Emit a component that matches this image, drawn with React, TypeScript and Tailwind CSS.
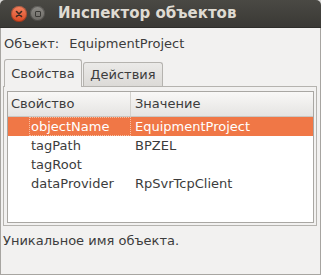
// Окно "Инспектор объектов": вкладка свойств с таблицей и подсказкой снизу.

const FONT = "font-['DejaVu_Sans',sans-serif]";

type Row = { name: string; value: string };

const ROWS: Row[] = [
  { name: 'objectName', value: 'EquipmentProject' },
  { name: 'tagPath', value: 'BPZEL' },
  { name: 'tagRoot', value: '' },
  { name: 'dataProvider', value: 'RpSvrTcpClient' },
];

function TitleBar() {
  return (
    <div className="flex h-[28px] items-center rounded-t-[5px] border-b border-[#2f2e2b] bg-gradient-to-b from-[#4a4944] to-[#3a3935]">
      {/* кнопки окна */}
      <div className="ml-[11px] flex h-[16px] w-[16px] items-center justify-center rounded-full bg-gradient-to-b from-[#f58360] to-[#d9471f] shadow-[inset_0_0_0_1px_rgba(0,0,0,0.25)]">
        <svg width="8" height="8" viewBox="0 0 8 8">
          <path d="M1.5 1.5 L6.5 6.5 M6.5 1.5 L1.5 6.5" stroke="#3b2a22" strokeWidth="1.6" strokeLinecap="round" />
        </svg>
      </div>
      <div className="ml-[3px] flex h-[15px] w-[15px] items-center justify-center rounded-full bg-gradient-to-b from-[#8d8b86] to-[#6c6a65] shadow-[inset_0_0_0_1px_rgba(0,0,0,0.3)]">
        <div className="h-[6px] w-[6px] rounded-[1px] border border-[#3a3935]" />
      </div>
      <span className="ml-[13px] text-[15px] font-bold leading-none text-[#dfdbd2]">
        Инспектор объектов
      </span>
    </div>
  );
}

function Tabs() {
  return (
    <div className="ml-[3px] flex items-end">
      <div className="relative z-10 -mb-px flex h-[28px] w-[78px] items-center justify-center rounded-t-[3px] border border-b-0 border-[#b5b3af] bg-[#f2f1f0] text-[13px]">
        Свойства
      </div>
      <div className="ml-px flex h-[24px] w-[80px] items-center justify-center rounded-t-[3px] border border-b-0 border-[#b5b3af] bg-gradient-to-b from-[#ebeae8] to-[#dcdad7] text-[13px]">
        Действия
      </div>
    </div>
  );
}

function PropertyTable() {
  return (
    <div className="flex h-[132px] w-[307px] flex-col border border-[#a9a7a3] bg-white">
      <div className="flex h-[25px] shrink-0 border-b border-[#c9c7c3] bg-gradient-to-b from-[#f9f8f7] to-[#e5e4e2] text-[13px]">
        <div className="flex w-[123px] items-center border-r border-[#d3d1cd] pl-[3px]">Свойство</div>
        <div className="flex items-center pl-[4px]">Значение</div>
      </div>
      {ROWS.map((r, i) => {
        const selected = i === 0;
        return (
          <div
            key={r.name}
            className={
              selected
                ? 'flex h-[19px] shrink-0 bg-[#f07746] text-[13px] text-white'
                : 'flex h-[19px] shrink-0 text-[13px]'
            }
          >
            <div className="flex w-[123px] items-center pl-[21px]">
              <div
                className={
                  selected
                    ? 'flex h-full w-full items-center border border-dotted border-[#f8c0a4] pl-[1px]'
                    : 'flex h-full w-full items-center pl-[2px]'
                }
              >
                {r.name}
              </div>
            </div>
            <div className="flex items-center pl-[4px]">{r.value}</div>
          </div>
        );
      })}
    </div>
  );
}

export default function App() {
  return (
    <div className={`h-[275px] w-[321px] bg-[#d9d8d6] text-[#3c3c3c] ${FONT}`}>
      <TitleBar />
      <div className="flex h-[247px] flex-col border-x border-b border-[#a7a5a1] bg-[#f2f1f0]">
        <div className="flex h-[31px] items-center pl-[3px] text-[13px]">
          <span>Объект:</span>
          <span className="ml-[10px]">EquipmentProject</span>
        </div>
        <Tabs />
        <div className="ml-[2px] h-[140px] w-[314px] border border-[#b5b3af] bg-[#f2f1f0] pt-[4px] pl-[3px]">
          <PropertyTable />
        </div>
        <div className="mt-[7px] pl-[2px] text-[13px] leading-[16px]">Уникальное имя объекта.</div>
      </div>
    </div>
  );
}
